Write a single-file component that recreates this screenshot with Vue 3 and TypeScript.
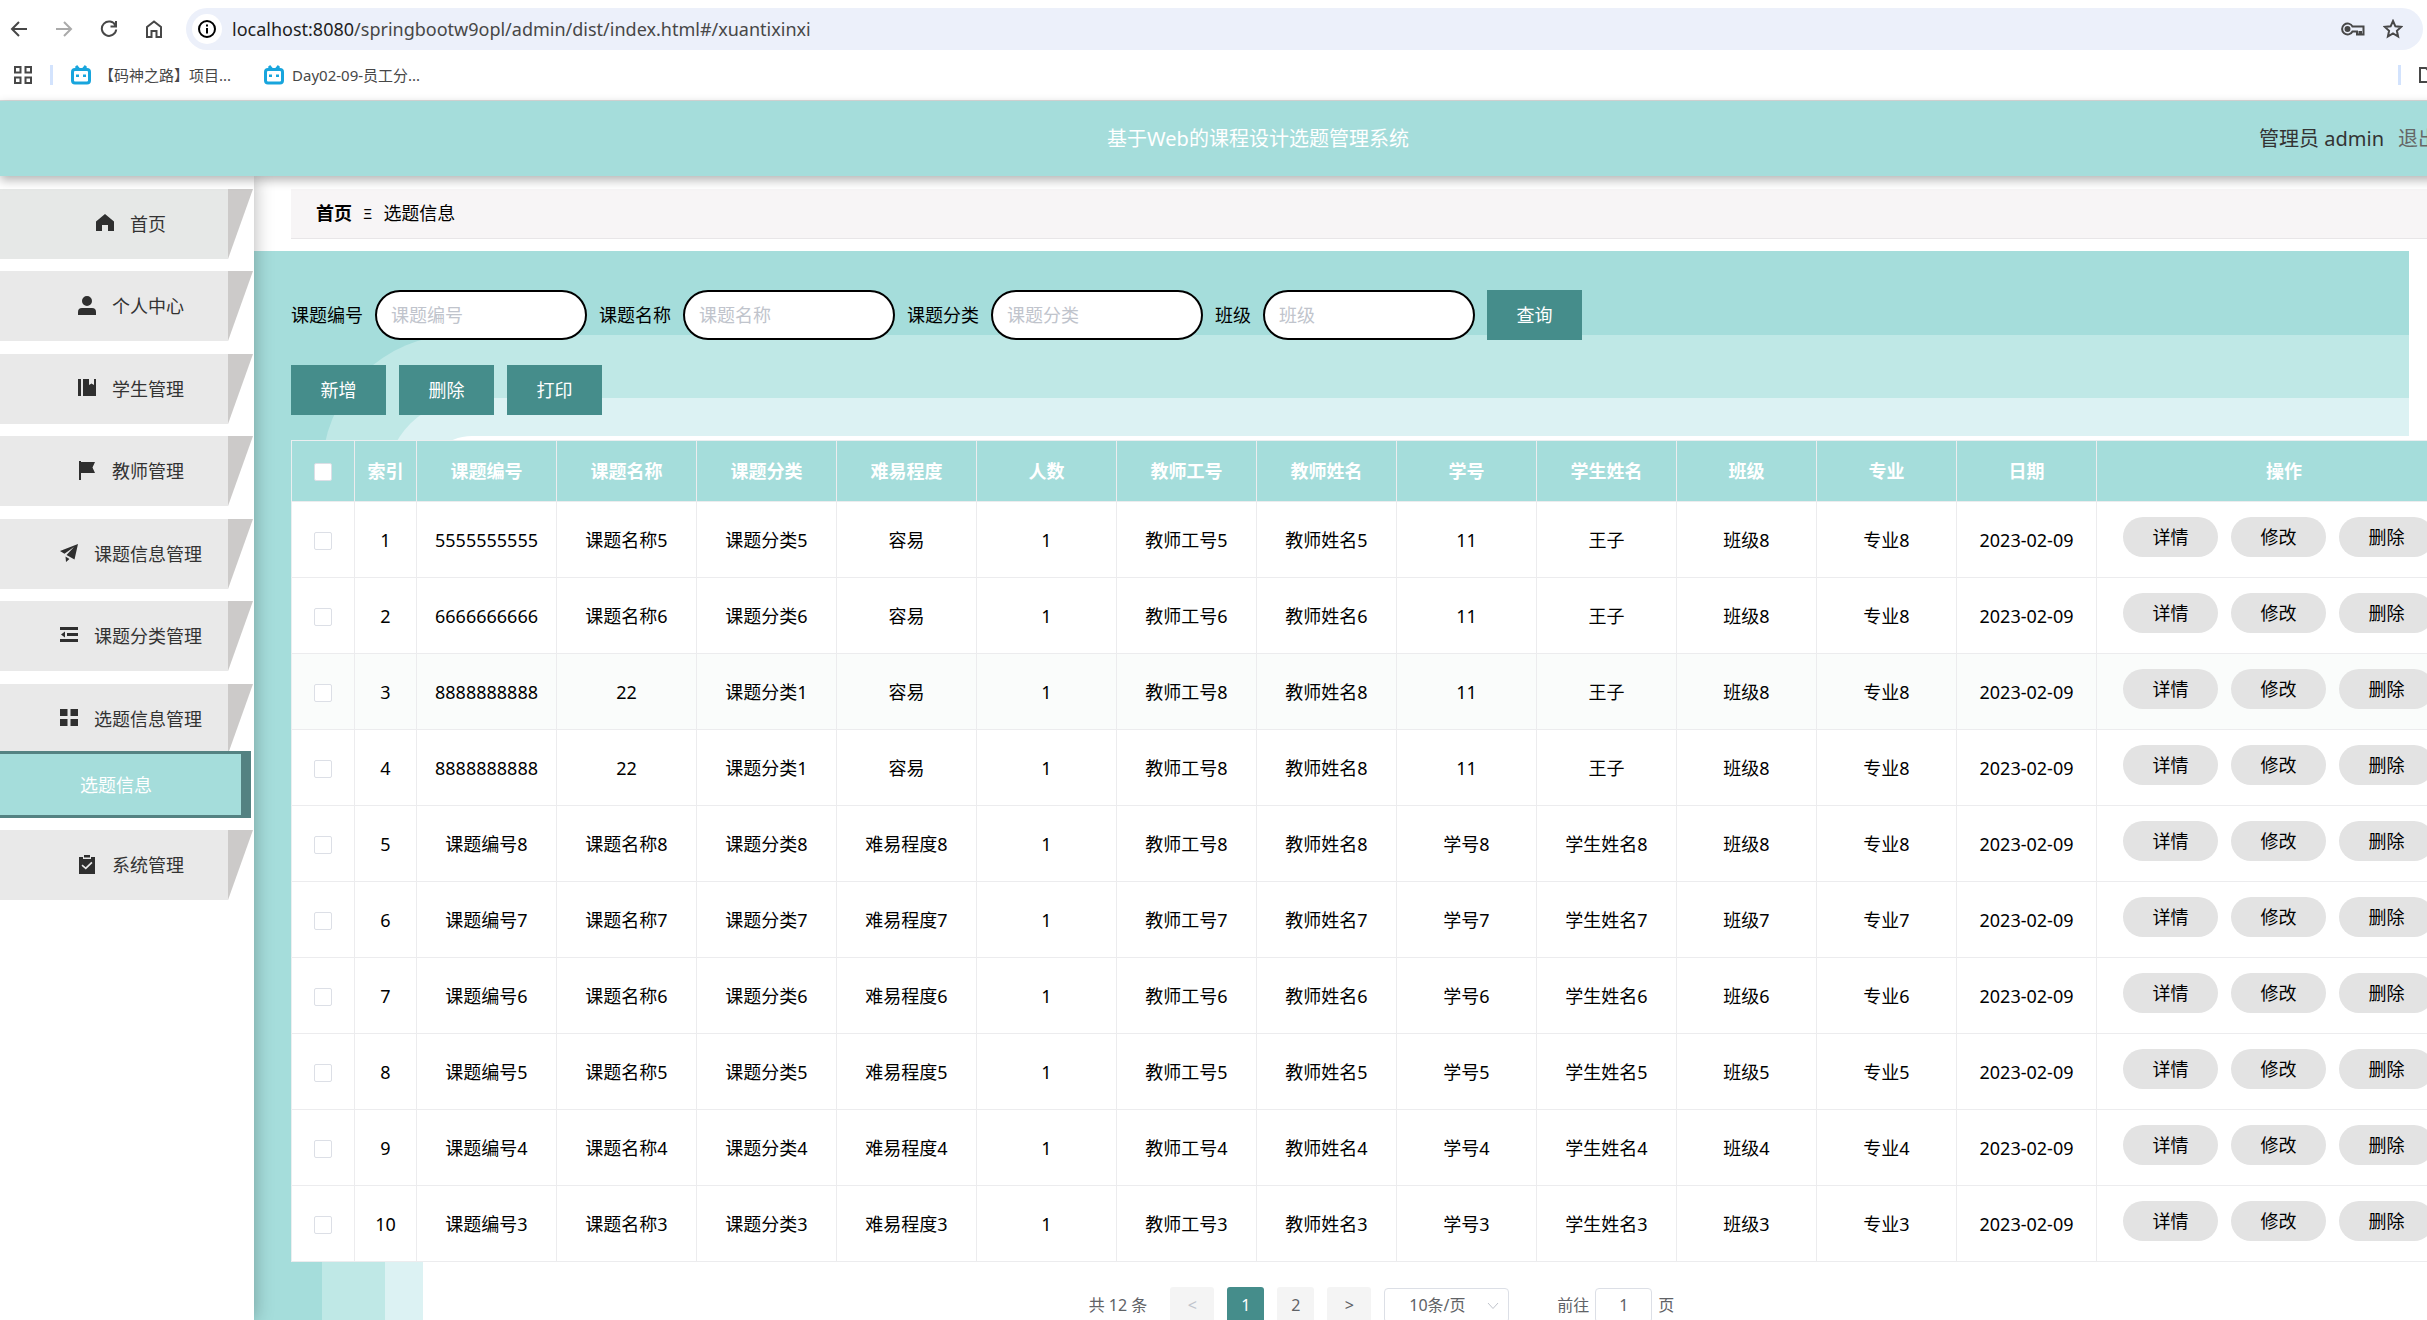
<script setup lang="ts">
import { ref } from 'vue'

interface MenuItem {
  label: string
  icon: string
  children?: string[]
}

interface TopicRow {
  id: number
  cells: string[]
  hovered?: boolean
}

const menu: MenuItem[] = [
  { label: '首页', icon: 'M9 0L0 7.500V17H6V11H12V17H18V7.500Z' },
  { label: '个人中心', icon: 'M9 0A5 5 0 1 1 9 10A5 5 0 1 1 9 0ZM4 12H14A4 4 0 0 1 18 16V19H0V16A4 4 0 0 1 4 12Z' },
  { label: '学生管理', icon: 'M0 0H3V17H0ZM5 0H11V6L13.500 4.500L16 6V0H18V17H5Z' },
  { label: '教师管理', icon: 'M1 0H3V1H17L14.500 6.500L17 12H3V19H1Z' },
  { label: '课题信息管理', icon: 'M18 0L0 7L4.500 9.800L14 3L6.500 11L14.500 15.500ZM5.500 12.500L9.500 15L6 18Z' },
  { label: '课题分类管理', icon: 'M0 1H18V4H0ZM7 7H18V10H7ZM0 13H18V16H0ZM5 5.500V11.500L1 8.500Z' },
  { label: '选题信息管理', icon: 'M0 0H7.500V7H0ZM10.500 0H18V7H10.500ZM0 10H7.500V17H0ZM10.500 10H18V17H10.500Z', children: ['选题信息'] },
  { label: '系统管理', icon: 'M1 2H5V4H13V2H17V19H1ZM6 0H12V2.500H6ZM4.500 9.500L3.500 10.700L7.800 14.500L14.500 8L13.300 6.800L7.700 12.200Z' },
]

const filters = ref([
  { id: 'topic-no', label: '课题编号', value: '' },
  { id: 'topic-name', label: '课题名称', value: '' },
  { id: 'topic-type', label: '课题分类', value: '' },
  { id: 'class-name', label: '班级', value: '' },
])

const toolbar = ['新增', '删除', '打印']
const rowActions = ['详情', '修改', '删除']
const columns = ['课题编号', '课题名称', '课题分类', '难易程度', '人数', '教师工号', '教师姓名', '学号', '学生姓名', '班级', '专业', '日期']
const date = '2023-02-09'

const assigned = (no: string, name: string, type: string, teacher: number): string[] => [
  no, name, type, '容易', '1', `教师工号${teacher}`, `教师姓名${teacher}`, '11', '王子', '班级8', '专业8', date,
]
const sample = (n: number): string[] => [
  `课题编号${n}`, `课题名称${n}`, `课题分类${n}`, `难易程度${n}`, '1', `教师工号${n}`, `教师姓名${n}`,
  `学号${n}`, `学生姓名${n}`, `班级${n}`, `专业${n}`, date,
]

const rows: TopicRow[] = [
  { id: 1, cells: assigned('5555555555', '课题名称5', '课题分类5', 5) },
  { id: 2, cells: assigned('6666666666', '课题名称6', '课题分类6', 6) },
  { id: 3, cells: assigned('8888888888', '22', '课题分类1', 8), hovered: true },
  { id: 4, cells: assigned('8888888888', '22', '课题分类1', 8) },
  ...[8, 7, 6, 5, 4, 3].map((n, i) => ({ id: i + 5, cells: sample(n) })),
]

const selected = ref<number[]>([])
const toggleAll = (event: Event) => {
  selected.value = (event.target as HTMLInputElement).checked ? rows.map((row) => row.id) : []
}

const url = ref('/springbootw9opl/admin/dist/index.html#/xuantixinxi')
const bookmarks = ['【码神之路】项目...', 'Day02-09-员工分...']
const pageSize = ref('10')
const jumpTo = ref('1')
</script>

<template>
  <div class="window">
    <div class="browser">
      <div class="nav-row">
        <button class="tool" aria-label="后退">
          <svg width="18" height="18" viewBox="0 0 18 18"><path d="M17 9H2M9 2L2 9L9 16" /></svg>
        </button>
        <button class="tool muted" aria-label="前进">
          <svg width="18" height="18" viewBox="0 0 18 18"><path d="M1 9H16M9 2L16 9L9 16" /></svg>
        </button>
        <button class="tool" aria-label="刷新">
          <svg width="18" height="18" viewBox="0 0 18 18"><path d="M15.500 5.500A7.200 7.200 0 1 0 16.200 9.500M16 1V6.500H10.500" /></svg>
        </button>
        <button class="tool" aria-label="主页">
          <svg width="18" height="18" viewBox="0 0 18 18"><path d="M2 7L9 1.500L16 7V17H11.500V11H6.500V17H2Z" /></svg>
        </button>
        <div class="address">
          <button class="site-info" aria-label="网站信息">
            <svg width="20" height="20" viewBox="0 0 20 20">
              <circle cx="10" cy="10" r="8" />
              <path d="M10 9V14.500M10 5.500V7.500" />
            </svg>
          </button>
          <div class="url"><b>localhost:8080</b>{{ url }}</div>
          <button class="tool" aria-label="密码">
            <svg width="24" height="16" viewBox="0 0 24 16">
              <path d="M11.500 5.500A5.500 5.500 0 1 0 11.500 10.500H16V13.500H18.500V11H20V13.500H22.500V5.500Z" />
              <circle cx="6.500" cy="8" r="2" fill="currentColor" />
            </svg>
          </button>
          <button class="tool" aria-label="收藏">
            <svg width="20" height="20" viewBox="0 0 20 20"><path d="M10 2L12.400 7.300L18.200 7.900L13.900 11.800L15.100 17.500L10 14.500L4.900 17.500L6.100 11.800L1.800 7.900L7.600 7.300Z" /></svg>
          </button>
        </div>
      </div>
      <div class="bookmark-row">
        <button class="tool apps" aria-label="应用">
          <svg width="18" height="18" viewBox="0 0 18 18"><path d="M1 1H6.500V6.500H1ZM11.500 1H17V6.500H11.500ZM1 11.500H6.500V17H1ZM11.500 11.500H17V17H11.500Z" /></svg>
        </button>
        <span class="divider"></span>
        <a v-for="mark in bookmarks" :key="mark" href="#" class="bookmark">
          <svg width="20" height="20" viewBox="0 0 20 20">
            <path d="M5 1L7.500 4M15 1L12.500 4" />
            <rect x="1.500" y="4.500" width="17" height="13.500" rx="2.500" />
            <path d="M6.500 9.500V12M13.500 9.500V12" />
          </svg>
          {{ mark }}
        </a>
        <span class="divider far"></span>
        <button class="tool folder" aria-label="所有书签">
          <svg width="18" height="16" viewBox="0 0 18 16"><path d="M1 1H7L9 3H17V15H1Z" /></svg>
        </button>
      </div>
    </div>

    <div class="app">
      <header class="header">
        <h1>基于Web的课程设计选题管理系统</h1>
        <div class="account">
          <span>管理员 admin</span>
          <button class="logout">退出</button>
        </div>
      </header>

      <div class="body">
        <nav class="sidebar">
          <div v-for="(item, i) in menu" :key="item.label" class="group">
            <a href="#" class="menu-item" :class="{ home: i === 0 }">
              <svg width="18" height="19" viewBox="0 0 18 19"><path :d="item.icon" fill-rule="evenodd" /></svg>
              <span>{{ item.label }}</span>
            </a>
            <a v-for="child in item.children" :key="child" href="#" class="sub-item">{{ child }}</a>
          </div>
        </nav>

        <main class="main">
          <div class="breadcrumb">
            <b>首页</b>
            <i>Ξ</i>
            <span>选题信息</span>
          </div>

          <section class="panel">
            <div class="backdrop"><div class="sheet"></div></div>

            <form class="filters" @submit.prevent>
              <template v-for="filter in filters" :key="filter.id">
                <label :for="filter.id">{{ filter.label }}</label>
                <input :id="filter.id" v-model="filter.value" type="text" :placeholder="filter.label" />
              </template>
              <button class="action">查询</button>
            </form>

            <div class="toolbar">
              <button v-for="name in toolbar" :key="name" class="action">{{ name }}</button>
            </div>

            <table class="grid">
              <colgroup>
                <col class="col-check" />
                <col class="col-index" />
                <col v-for="column in columns" :key="column" class="col-data" />
                <col class="col-actions" />
              </colgroup>
              <thead>
                <tr>
                  <th><input type="checkbox" aria-label="全选" @change="toggleAll" /></th>
                  <th>索引</th>
                  <th v-for="column in columns" :key="column">{{ column }}</th>
                  <th>操作</th>
                </tr>
              </thead>
              <tbody>
                <tr v-for="row in rows" :key="row.id" :class="{ hovered: row.hovered }">
                  <td><input v-model="selected" type="checkbox" :value="row.id" :aria-label="`选择第${row.id}行`" /></td>
                  <td>{{ row.id }}</td>
                  <td v-for="(cell, i) in row.cells" :key="i">{{ cell }}</td>
                  <td>
                    <div class="row-actions">
                      <button v-for="name in rowActions" :key="name">{{ name }}</button>
                    </div>
                  </td>
                </tr>
              </tbody>
            </table>

            <div class="pagination">
              <span class="total">共 12 条</span>
              <button class="step" disabled>&lt;</button>
              <button class="page current">1</button>
              <button class="page">2</button>
              <button class="step">&gt;</button>
              <div class="size">
                <select v-model="pageSize" aria-label="每页条数">
                  <option value="10">10条/页</option>
                  <option value="20">20条/页</option>
                </select>
                <svg width="12" height="8" viewBox="0 0 12 8"><path d="M1 1L6 6.500L11 1" /></svg>
              </div>
              <div class="jump">
                <label for="jump">前往</label>
                <input id="jump" v-model="jumpTo" type="text" />
                <span>页</span>
              </div>
            </div>
          </section>
        </main>
      </div>
    </div>
  </div>
</template>

<style>
body {
  margin: 0;
  background: #fff;
}
</style>

<style scoped>
* {
  box-sizing: border-box;
}

.window {
  height: 100vh;
  overflow: hidden;
  display: flex;
  flex-direction: column;
  background: #fff;
  color: #000;
  font-family: "Noto Sans", "Noto Sans CJK SC", sans-serif;
  font-size: 18px;
  line-height: 24px;
}

button,
input,
select {
  font: inherit;
  color: inherit;
  border: 0;
  margin: 0;
  padding: 0;
}

button {
  cursor: pointer;
}

a {
  color: inherit;
  text-decoration: none;
}

/* browser bars */
.browser {
  flex: none;
  height: 101px;
  padding-top: 8px;
  border-bottom: 1px solid #dcdcdc;
  overflow: hidden;
}

.nav-row {
  display: flex;
  align-items: center;
  padding: 0 4px 0 10px;
}

.tool {
  display: flex;
  flex: none;
  background: none;
  color: #474747;
}

.tool svg,
.site-info svg {
  fill: none;
  stroke: currentColor;
  stroke-width: 2;
}

.nav-row > .tool {
  margin-right: 27px;
}

.nav-row > .muted {
  color: #aaa;
}

.address {
  flex: 1;
  display: flex;
  align-items: center;
  gap: 18px;
  height: 42px;
  margin-left: -4px;
  padding: 0 20px 0 6px;
  border-radius: 21px;
  background: #ecf0fa;
}

.site-info {
  display: grid;
  place-items: center;
  width: 30px;
  height: 30px;
  border-radius: 50%;
  background: #fff;
}

.url {
  flex: 1;
  margin-left: -8px;
  color: #474747;
}

.url b {
  font-weight: 400;
  color: #1f1f1f;
}

.bookmark-row {
  display: flex;
  align-items: center;
  height: 50px;
  padding-left: 14px;
  font-size: 15px;
  color: #474747;
}

.divider {
  flex: none;
  width: 3px;
  height: 20px;
  margin: 0 18px;
  background: #d3e3fd;
}

.divider.far {
  margin-left: auto;
}

.bookmark {
  display: flex;
  align-items: center;
  gap: 8px;
  margin-right: 33px;
}

.bookmark svg {
  fill: none;
  stroke: #18a5dd;
  stroke-width: 3;
}

.folder {
  margin-right: -10px;
}

/* application */
.app {
  flex: 1;
  min-height: 0;
  width: calc(100% + 89px);
  display: flex;
  flex-direction: column;
}

.header {
  position: relative;
  z-index: 2;
  flex: none;
  display: grid;
  grid-template-columns: 1fr auto 1fr;
  align-items: center;
  height: 75px;
  background: #a5dddb;
  box-shadow: 0 4px 10px rgba(0, 0, 0, 0.3);
  font-size: 20px;
  color: #333;
}

.header h1 {
  grid-column: 2;
  margin: 0;
  font-size: 20px;
  font-weight: 400;
  color: #fff;
}

.account {
  display: flex;
  justify-content: flex-end;
  gap: 14px;
  padding-right: 78px;
}

.logout {
  background: none;
  color: #666;
}

.body {
  flex: 1;
  display: flex;
  min-height: 0;
}

.sidebar {
  position: relative;
  z-index: 1;
  flex: none;
  width: 254px;
  padding-top: 13px;
  background: #fff;
  box-shadow: 0 0 18px rgba(0, 0, 0, 0.3);
}

.group {
  margin-bottom: 12px;
}

.group:nth-child(even) {
  margin-bottom: 13px;
}

.menu-item {
  position: relative;
  display: flex;
  align-items: center;
  justify-content: center;
  gap: 16px;
  width: 253px;
  height: 70px;
  padding-left: 9px;
  background: linear-gradient(to right, #e9e9e9 228px, #cccac9 228px);
  clip-path: polygon(0 0, 100% 0, 228px 100%, 0 100%);
  color: #333;
}

.menu-item.home {
  background: linear-gradient(to right, #e6e8e7 228px, #cccac9 228px);
}

.menu-item svg {
  fill: #2f2f2f;
  margin-bottom: 2px;
}

.sub-item {
  position: relative;
  display: flex;
  align-items: center;
  justify-content: center;
  width: 251px;
  height: 67px;
  margin-top: -3px;
  padding-right: 9px;
  border: solid #548282;
  border-width: 3px 10px 3px 0;
  background: #a5dddb;
  color: #fff;
}

.main {
  flex: 1;
  min-width: 0;
  display: flex;
  flex-direction: column;
  padding-top: 13px;
}

.breadcrumb {
  flex: none;
  display: flex;
  align-items: center;
  gap: 11px;
  height: 50px;
  margin-left: 37px;
  padding: 0 25px 2px;
  border-bottom: 1px solid #e8e6e8;
  background: #f7f5f6;
}

.breadcrumb i {
  font-style: normal;
  font-size: 15px;
}

.panel {
  position: relative;
  flex: 1;
  margin-top: 12px;
  padding: 39px 44px 0 37px;
}

.backdrop {
  position: absolute;
  inset: 0 107px 0 0;
  overflow: hidden;
  background: #a5dddb;
}

.sheet {
  height: 100%;
  margin: 185px 0 0 169px;
  border-top-left-radius: 49px;
  background: #fff;
  box-shadow: 0 0 0 38px #dcf2f3, 0 0 0 101px #bfe8e6;
}

.filters,
.toolbar {
  position: relative;
  display: flex;
  align-items: center;
  gap: 12px;
  margin-bottom: 25px;
}

.toolbar {
  gap: 13px;
}

.filters input {
  width: 212px;
  height: 50px;
  padding: 0 14px;
  border: 2px solid #000;
  border-radius: 25px;
  background: #fff;
}

.filters input::placeholder {
  color: #c0c4cc;
}

.action {
  width: 95px;
  height: 50px;
  background: #458d8b;
  color: #fff;
}

.grid {
  position: relative;
  width: 100%;
  table-layout: fixed;
  border-collapse: separate;
  border-spacing: 0;
  border: solid #ebeef0;
  border-width: 1px 0 0 1px;
  background: #fff;
  text-align: center;
}

.col-check {
  width: 63px;
}

.col-index {
  width: 62px;
}

.col-data {
  width: 140px;
}

.grid th,
.grid td {
  padding: 0;
  border: solid #ececee;
  border-width: 0 1px 1px 0;
}

.grid th {
  height: 61px;
  background: #a5dddb;
  color: #fff;
  font-weight: 700;
}

.grid td {
  height: 76px;
}

.hovered td {
  background: #fafcfb;
}

.grid input {
  appearance: none;
  display: block;
  width: 18px;
  height: 18px;
  margin: 2px auto 0;
  border: 1px solid #dcdfe6;
  border-radius: 2px;
  background: #fff;
}

.grid input:checked {
  background: #458d8b;
}

.row-actions {
  display: flex;
  gap: 13px;
  padding: 0 0 5px 26px;
}

.row-actions button {
  width: 95px;
  height: 40px;
  border-radius: 20px;
  background: #e3e3e3;
}

.pagination {
  position: relative;
  display: flex;
  align-items: center;
  justify-content: center;
  gap: 13px;
  margin-top: 25px;
  color: #606266;
  font-size: 16px;
}

.total {
  margin-right: 10px;
}

.pagination button {
  height: 36px;
  border-radius: 3px;
  background: #f4f4f4;
}

.step {
  width: 44px;
}

.step:disabled {
  color: #c0c4cc;
}

.page {
  width: 37px;
}

.pagination .current {
  background: #458d8b;
  color: #fff;
}

.size {
  position: relative;
}

.size select {
  appearance: none;
  width: 125px;
  height: 35px;
  padding-left: 24px;
  border: 1px solid #dcdfe6;
  border-radius: 4px;
  background: #fff;
}

.size svg {
  position: absolute;
  top: 14px;
  right: 10px;
  fill: none;
  stroke: #c0c4cc;
}

.jump {
  display: flex;
  align-items: center;
  gap: 6px;
  margin-left: 35px;
}

.jump input {
  width: 57px;
  height: 35px;
  border: 1px solid #dcdfe6;
  border-radius: 4px;
  background: #fff;
  text-align: center;
}
</style>
